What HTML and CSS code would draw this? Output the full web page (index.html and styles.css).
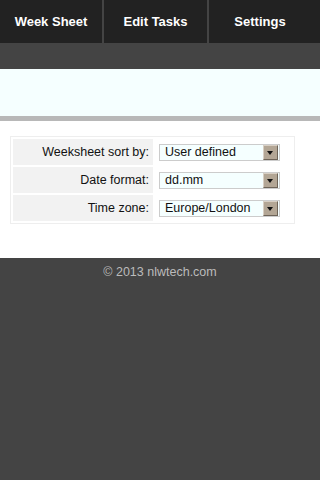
FILE: index.html
```html
<!DOCTYPE html>
<html lang="en">
<head>
  <meta charset="UTF-8" />
  <meta name="viewport" content="width=device-width, initial-scale=1.0"/>
  <title>Settings</title>
  <link rel="stylesheet" href="styles.css">
</head>
<body>

<!-- Top menu -->
<nav class="navbar">
  <a href="#" class="nav-item">Week Sheet</a>
  <a href="#" class="nav-item">Edit Tasks</a>
  <a href="#" class="nav-item">Settings</a>
</nav>

<div class="subbar"></div>
<div class="banner"></div>

<!-- Settings form -->
<div class="content">
  <table class="settings">
    <tr>
      <td class="label">Weeksheet sort by:</td>
      <td class="value">
        <div class="select"><span>User defined</span><i class="arrow"></i></div>
      </td>
    </tr>
    <tr>
      <td class="label">Date format:</td>
      <td class="value">
        <div class="select"><span>dd.mm</span><i class="arrow"></i></div>
      </td>
    </tr>
    <tr>
      <td class="label">Time zone:</td>
      <td class="value">
        <div class="select"><span>Europe/London</span><i class="arrow"></i></div>
      </td>
    </tr>
  </table>
</div>

<footer class="footer">&copy; 2013 nlwtech.com</footer>

</body>
</html>
```

FILE: styles.css
```css
* {
  margin: 0;
  padding: 0;
  box-sizing: border-box;
}

html, body {
  height: 100%;
}

body {
  font-family: 'Liberation Sans', Arial, sans-serif;
  font-size: 12.5px;
  color: #111;
  background-color: #444;
  display: flex;
  flex-direction: column;
}

/* Top menu */
.navbar {
  display: grid;
  grid-template-columns: 102px 103px 1fr;
  column-gap: 2px;
  height: 43px;
  background-color: #444;
}

.nav-item {
  display: flex;
  align-items: center;
  justify-content: center;
  background-color: #222;
  color: #fff;
  font-weight: bold;
  font-size: 13px;
  text-decoration: none;
}

.nav-item:last-child {
  padding-right: 9px;
}

.subbar {
  height: 26px;
  background-color: #444;
}

.banner {
  height: 52px;
  background-color: #f5ffff;
  border-bottom: 5px solid #b8b8b8;
}

/* Settings form */
.content {
  background-color: #fff;
  padding: 15px 25px 34px 10px;
}

.settings {
  width: 100%;
  border: 1px solid #eee;
  border-spacing: 2px;
}

.settings td {
  height: 26px;
  padding: 0;
}

.label {
  width: 140px;
  background-color: #f2f2f2;
  text-align: right;
  padding-right: 4px !important;
}

.value {
  padding-left: 4px !important;
}

.select {
  display: flex;
  align-items: center;
  justify-content: space-between;
  width: 121px;
  height: 17px;
  padding: 0 1px 0 5px;
  background-color: #f5ffff;
  border: 1px solid #ccc;
}

.arrow {
  position: relative;
  width: 15px;
  height: 15px;
  background-color: #b3a695;
  border-right: 1px solid #6e6458;
  border-bottom: 1px solid #6e6458;
  border-top: 1px solid #d8cfc4;
  border-left: 1px solid #d8cfc4;
}

.arrow::after {
  content: '';
  position: absolute;
  left: 3px;
  top: 5px;
  border-left: 3.5px solid transparent;
  border-right: 3.5px solid transparent;
  border-top: 4px solid #111;
}

/* Footer */
.footer {
  flex: 1;
  background-color: #444;
  color: #bbb;
  text-align: center;
  padding-top: 7px;
}
```
